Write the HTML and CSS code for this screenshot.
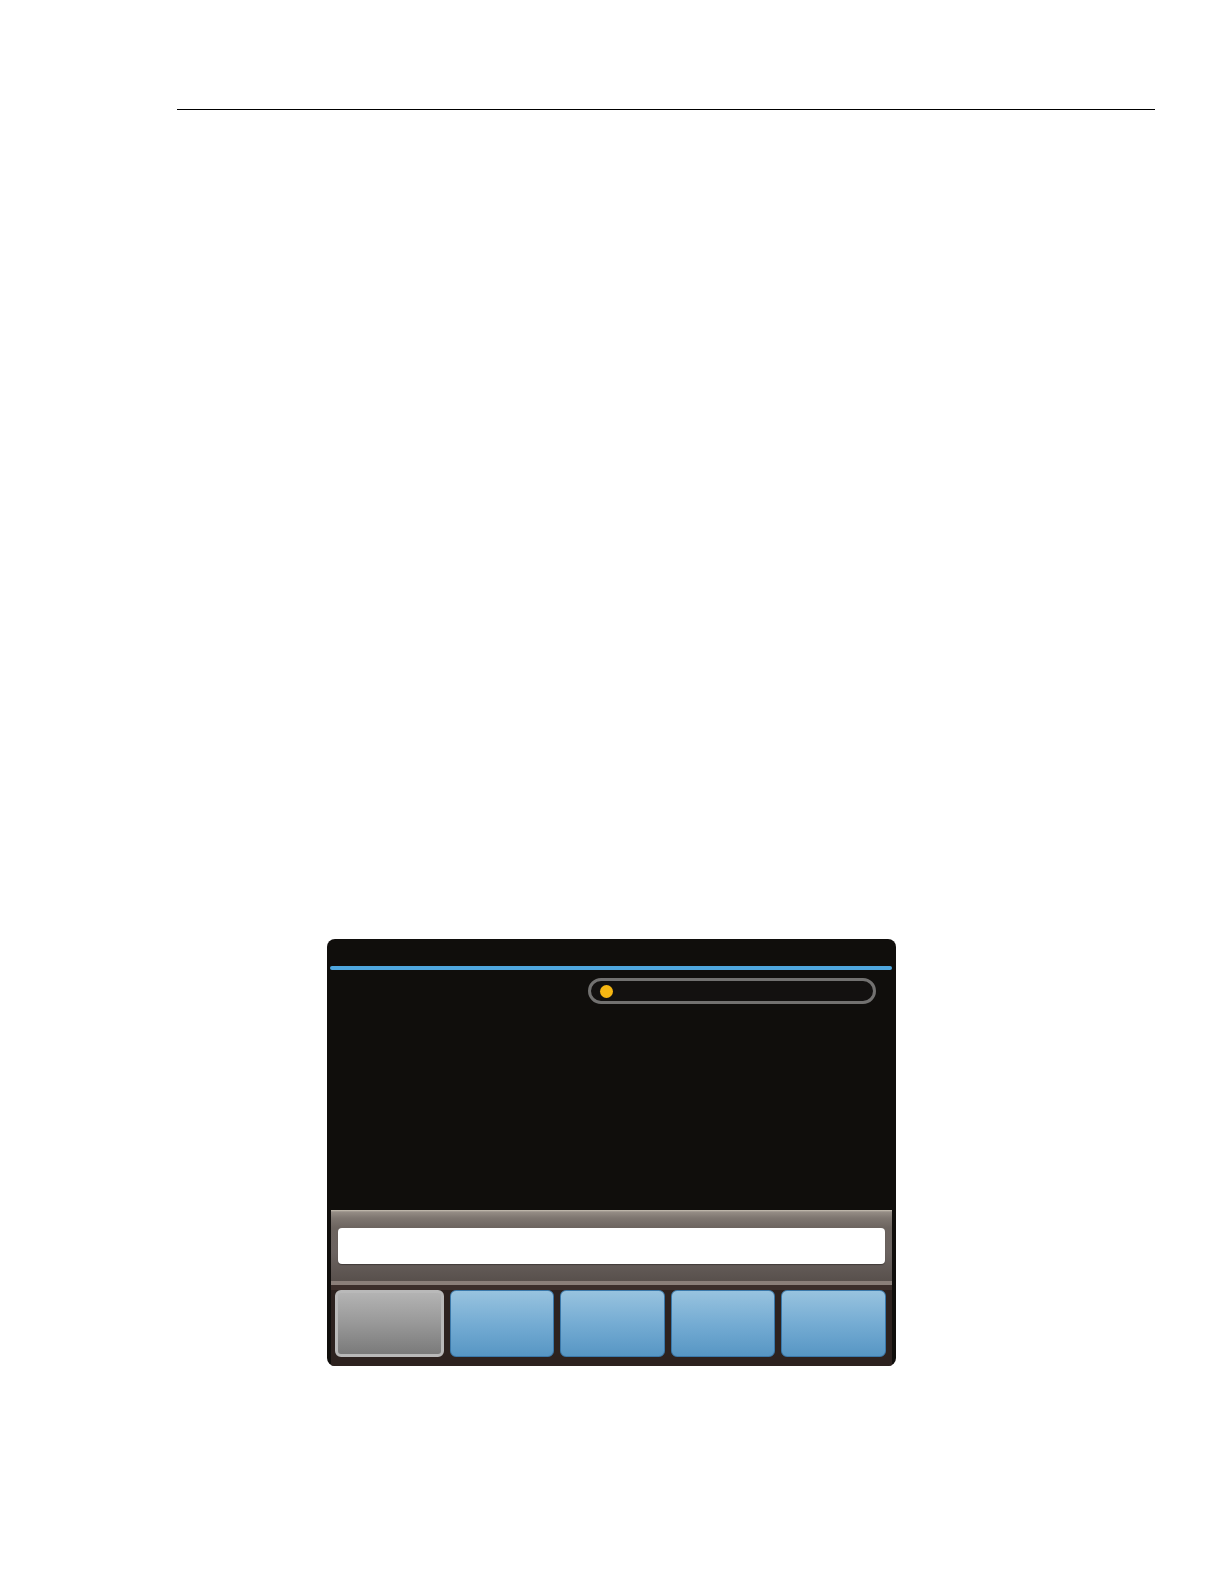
FILE: index.html
```html
<!DOCTYPE html>
<html>
<head>
<meta charset="utf-8">
<link rel="stylesheet" href="styles.css">
</head>
<body>
<div class="page">
  <div class="rule"></div>
  <div class="device">
    <div class="header"></div>
    <div class="accent"></div>
    <div class="content">
      <div class="status-pill"><span class="dot"></span></div>
    </div>
    <div class="panel">
      <div class="input-zone">
        <div class="input"></div>
      </div>
      <div class="separator"></div>
      <div class="buttons">
        <div class="btn btn-gray"></div>
        <div class="btn btn-blue"></div>
        <div class="btn btn-blue"></div>
        <div class="btn btn-blue"></div>
        <div class="btn btn-blue"></div>
      </div>
    </div>
  </div>
</div>
</body>
</html>
```

FILE: styles.css
```css
html, body {
  margin: 0;
  padding: 0;
  background: #ffffff;
  font-family: "Liberation Sans", Arial, sans-serif;
}

.page {
  width: 1224px;
  height: 1584px;
  box-sizing: border-box;
  padding: 109px 69px 0 177px;
}

.rule {
  height: 1px;
  background: #000;
}

.device {
  margin-top: 829px;
  margin-left: 150px;
  width: 569px;
  height: 427px;
  background: #100e0c;
  border-radius: 8px;
  display: flex;
  flex-direction: column;
  overflow: hidden;
}

.header {
  height: 27px;
  flex: none;
}

.accent {
  height: 4px;
  margin: 0 4px 0 3px;
  background: #4fa7df;
  border-radius: 2px;
  flex: none;
}

.content {
  flex: 1;
  display: flex;
  justify-content: flex-end;
  align-items: flex-start;
  padding: 8px 20px 0 0;
}

.status-pill {
  width: 273px;
  height: 20px;
  border: 3px solid #727170;
  border-radius: 14px;
  background: #131110;
  display: flex;
  align-items: center;
  padding-left: 9px;
  box-sizing: content-box;
}

.dot {
  width: 13px;
  height: 13px;
  border-radius: 50%;
  background: #f6b612;
}

.panel {
  flex: none;
  margin: 0 4px;
  display: flex;
  flex-direction: column;
}

.input-zone {
  padding: 18px 7px 17px 7px;
  box-sizing: content-box;
  height: 36px;
  background: linear-gradient(to bottom, #c9c2b4 0px, #958d86 2px, #7e7670 8px, #6c645f 18px, #6b6360 60%, #58504c 100%);
}

.input {
  height: 36px;
  background: #ffffff;
  border-radius: 4px;
  box-shadow: 0 1px 1px rgba(0,0,0,0.35);
}

.separator {
  height: 4px;
  background: #8a7f79;
  border-bottom: 5px solid #3b2e2a;
}

.buttons {
  display: flex;
  gap: 6px;
  padding: 0 6px 9px 4px;
  background: #2d221f;
}

.btn {
  flex: 1;
  height: 67px;
  box-sizing: border-box;
  border-radius: 6px;
}

.btn-gray {
  border: 3px solid #b9b9b9;
  background: linear-gradient(to bottom, #b3b3b3 0%, #989898 50%, #7a7a7a 100%);
}

.btn-blue {
  border: 1px solid #3a78aa;
  background: linear-gradient(to bottom, #98c3df 0%, #75acd3 50%, #5796c4 100%);
}
```
